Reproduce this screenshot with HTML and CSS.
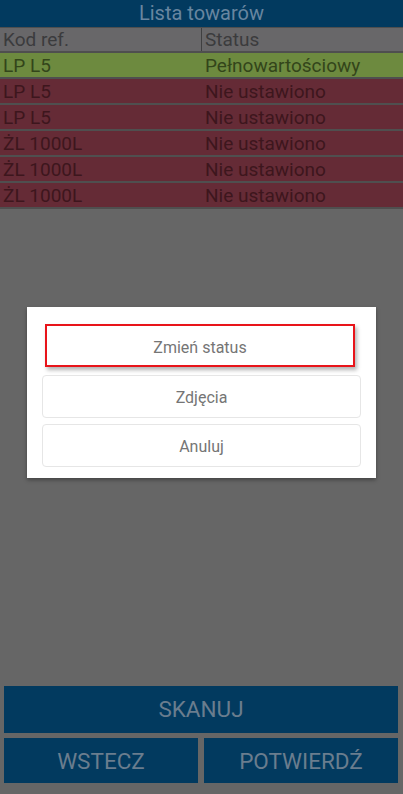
FILE: index.html
```html
<!DOCTYPE html>
<html lang="pl">
<head>
<meta charset="utf-8">
<link rel="stylesheet" href="styles.css">
</head>
<body>
<div class="screen">
  <div class="titlebar">Lista towarów</div>
  <div class="table">
    <div class="row head"><div class="c1">Kod ref.</div><div class="c2">Status</div></div>
    <div class="row ok"><div class="c1">LP L5</div><div class="c2">Pełnowartościowy</div></div>
    <div class="row bad"><div class="c1">LP L5</div><div class="c2">Nie ustawiono</div></div>
    <div class="row bad"><div class="c1">LP L5</div><div class="c2">Nie ustawiono</div></div>
    <div class="row bad"><div class="c1">ŻL 1000L</div><div class="c2">Nie ustawiono</div></div>
    <div class="row bad"><div class="c1">ŻL 1000L</div><div class="c2">Nie ustawiono</div></div>
    <div class="row bad"><div class="c1">ŻL 1000L</div><div class="c2">Nie ustawiono</div></div>
  </div>
  <div class="spacer"></div>
  <div class="actions">
    <div class="btn wide">SKANUJ</div>
    <div class="pair">
      <div class="btn">WSTECZ</div>
      <div class="btn">POTWIERDŹ</div>
    </div>
  </div>
</div>
<div class="dialog">
  <div class="dbtn focused">Zmień status</div>
  <div class="dbtn">Zdjęcia</div>
  <div class="dbtn">Anuluj</div>
</div>
</body>
</html>
```
FILE: styles.css
```css
html, body {
  margin: 0;
  padding: 0;
  background: #666666;
  font-family: Roboto, "Noto Sans", sans-serif;
}
.screen {
  width: 403px;
  height: 794px;
  display: flex;
  flex-direction: column;
}
.titlebar {
  height: 27px;
  background: #023a5f;
  color: #6886a0;
  font-size: 20px;
  line-height: 27px;
  text-align: center;
}
.table {
  display: flex;
  flex-direction: column;
  background: #4f4f4f;
  gap: 2px;
  padding-bottom: 2px;
}
.row {
  display: flex;
  height: 24px;
  font-size: 19px;
  line-height: 25px;
}
.row .c1 {
  width: 199px;
  padding-left: 3px;
}
.row .c2 {
  flex: 1;
  padding-left: 3px;
}
.row.head {
  background: #686769;
  color: #3b3b3d;
  height: 23px;
  line-height: 24px;
  margin-top: 1px;
}
.row.head .c1 {
  border-right: 1px solid #3f3f40;
  width: 198px;
}
.row.ok {
  background: #6d8a3f;
  color: #33451a;
}
.row.bad {
  background: #652b36;
  color: #3d161d;
}
.spacer {
  flex: 1;
}
.actions {
  display: flex;
  flex-direction: column;
  gap: 5px;
  padding: 0 5px 11px 4px;
}
.btn {
  background: #023a5f;
  color: #6a7d8e;
  font-size: 22.5px;
  height: 45px;
  line-height: 47px;
  text-align: center;
  flex: 1;
}
.btn.wide {
  height: 46px;
}
.pair {
  display: flex;
  gap: 6px;
}
.dialog {
  position: absolute;
  left: 27px;
  top: 307px;
  width: 349px;
  height: 171px;
  box-sizing: border-box;
  background: #ffffff;
  box-shadow: 0 2px 4px rgba(0,0,0,0.35);
  padding: 17px 15px 0 15px;
  display: flex;
  flex-direction: column;
  gap: 6px;
}
.dbtn {
  height: 43px;
  border: 1px solid #e6e6e6;
  border-radius: 4px;
  box-sizing: border-box;
  color: #757575;
  font-size: 16px;
  line-height: 44px;
  text-align: center;
  background: #fff;
}
.dbtn.focused {
  border: 2px solid #e8141a;
  border-radius: 0;
  margin: 0 6px 2px 3px;
  box-shadow: 2px 3px 4px rgba(0,0,0,0.3);
  line-height: 44px;
}
```
